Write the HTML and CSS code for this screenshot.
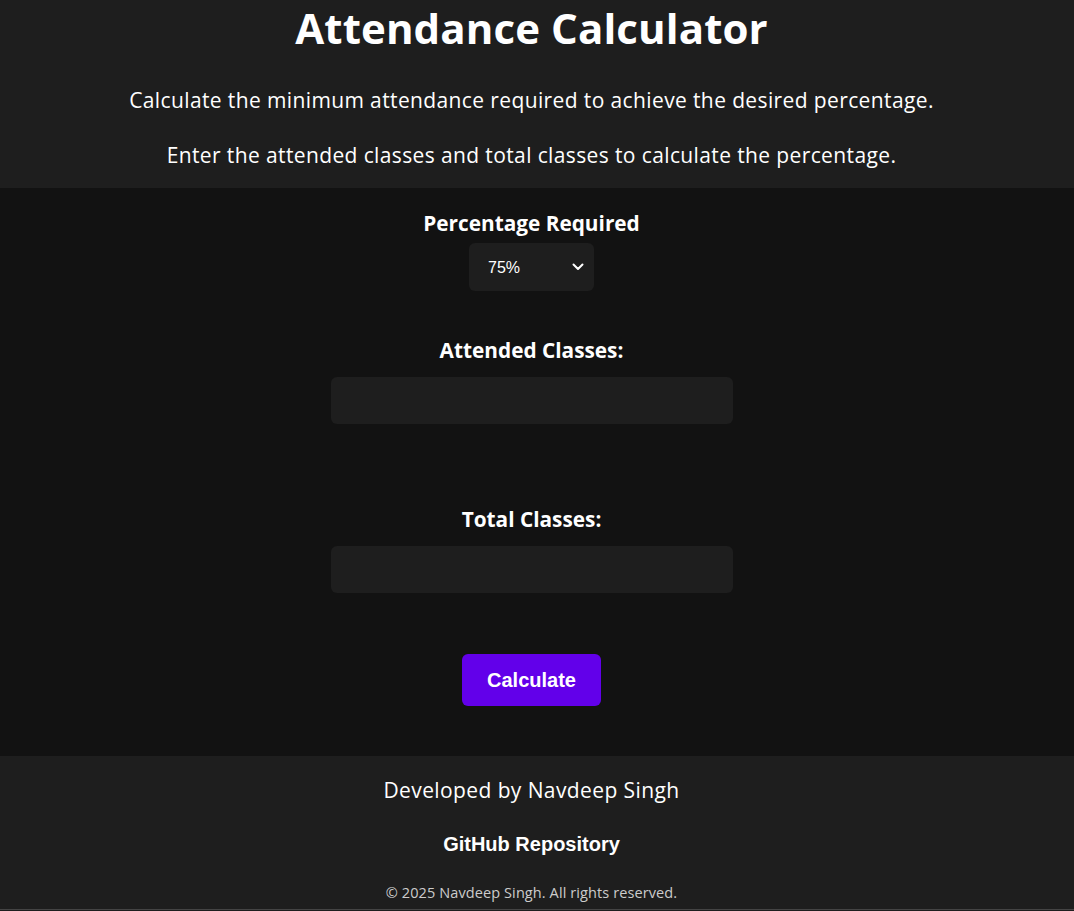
FILE: index.html
```html
<!DOCTYPE html>
<html lang="en">
<head>
<meta charset="utf-8">
<title>Attendance Calculator</title>
<link rel="stylesheet" href="styles.css">
</head>
<body>
<header class="top">
  <h1 class="title">Attendance Calculator</h1>
  <p class="intro intro-first">Calculate the minimum attendance required to achieve the desired percentage.</p>
  <p class="intro">Enter the attended classes and total classes to calculate the percentage.</p>
</header>
<main class="calc">
  <label class="field-label" for="pct">Percentage Required</label>
  <div class="select-wrap">
    <select id="pct" class="select">
      <option>75%</option>
      <option>60%</option>
      <option>80%</option>
      <option>85%</option>
    </select>
    <svg class="chev" width="12" height="8" viewBox="0 0 12 8"><path d="M1.5 1.5 L6 6 L10.5 1.5" fill="none" stroke="#fff" stroke-width="2" stroke-linecap="round" stroke-linejoin="round"/></svg>
  </div>
  <label class="field-label label-attended" for="att">Attended Classes:</label>
  <input id="att" class="num" type="number">
  <label class="field-label label-total" for="tot">Total Classes:</label>
  <input id="tot" class="num" type="number">
  <button class="btn" type="button">Calculate</button>
</main>
<footer class="foot">
  <p class="dev">Developed by Navdeep Singh</p>
  <a class="repo" href="#">GitHub Repository</a>
  <p class="copy">© 2025 Navdeep Singh. All rights reserved.</p>
</footer>
</body>
</html>
```
FILE: styles.css
```css
html, body {
  margin: 0;
  padding: 0;
  background: #1e1e1e;
  color: #ffffff;
  font-family: "Open Sans", "Liberation Sans", sans-serif;
}
.top,
.calc,
.foot {
  box-sizing: border-box;
  padding-right: 11px;
}
.top {
  background: #1e1e1e;
  text-align: center;
  height: 188px;
  padding-top: 3px;
}
.title {
  margin: 0;
  font-size: 42px;
  font-weight: 700;
  line-height: 50px;
  letter-spacing: 0.1px;
}
.intro {
  margin: 0;
  font-size: 21px;
  line-height: 30px;
  letter-spacing: 0.38px;
}
.intro-first {
  margin-top: 32px;
  margin-bottom: 25px;
}
.calc {
  background: #121212;
  display: flex;
  flex-direction: column;
  align-items: center;
  padding-top: 20px;
  padding-bottom: 50px;
}
.field-label {
  font-size: 20.8px;
  font-weight: 700;
  line-height: 30px;
}
.select-wrap {
  position: relative;
  margin-top: 5px;
  width: 125px;
  height: 48px;
}
.select {
  appearance: none;
  -webkit-appearance: none;
  width: 100%;
  height: 100%;
  background: #1e1e1e;
  color: #fff;
  border: none;
  border-radius: 6px;
  padding: 0 0 0 19px;
  font-family: "Liberation Sans", Arial, sans-serif;
  font-size: 16px;
  outline: none;
}
.chev {
  position: absolute;
  right: 10px;
  top: 20px;
  pointer-events: none;
}
.label-attended {
  margin-top: 44px;
}
.label-total {
  margin-top: 80px;
}
.num {
  margin-top: 12px;
  width: 402px;
  height: 47px;
  box-sizing: border-box;
  background: #1e1e1e;
  border: none;
  border-radius: 6px;
  color: #fff;
  font-size: 16px;
  padding: 0 12px;
  outline: none;
}
.btn {
  margin-top: 61px;
  width: 139px;
  height: 52px;
  background: #6200ea;
  color: #fff;
  border: none;
  border-radius: 6px;
  font-family: "Liberation Sans", Arial, sans-serif;
  font-size: 20px;
  font-weight: 700;
  cursor: pointer;
}
.foot {
  background: #1e1e1e;
  text-align: center;
  display: flex;
  flex-direction: column;
  align-items: center;
  padding-top: 19px;
  height: 154px;
  border-bottom: 1px solid #444;
}
.dev {
  margin: 0;
  font-size: 21px;
  line-height: 30px;
  letter-spacing: 0.4px;
}
.repo {
  margin-top: 27px;
  color: #fff;
  text-decoration: none;
  font-family: "Liberation Sans", Arial, sans-serif;
  font-size: 20px;
  font-weight: 700;
  line-height: 24px;
}
.copy {
  margin: 27px 0 0;
  font-size: 14.5px;
  line-height: 20px;
  letter-spacing: 0.1px;
  color: #cccccc;
}
```
